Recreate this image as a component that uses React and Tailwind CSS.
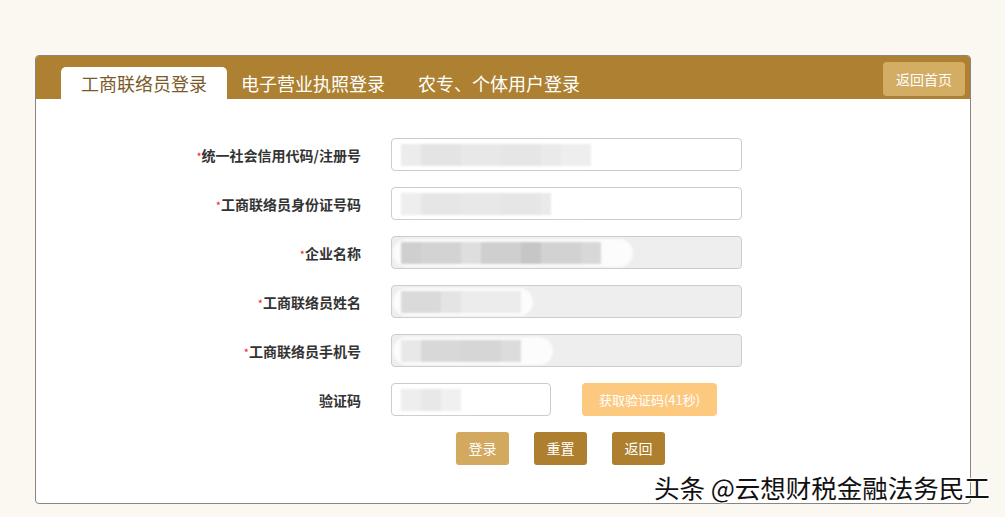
import React from 'react';

const font = { fontFamily: '"Noto Sans CJK SC", "Noto Sans", sans-serif' };

function Blur({ blocks, glow }) {
  return (
    <div className="flex h-full items-center pl-[9px]">
      <div className="relative flex h-[22px] blur-[1px]">
        {glow && <div className={`absolute -left-[8px] -top-[3px] h-[28px] rounded-full bg-white opacity-80 ${glow}`} />}
        {blocks.map((b, i) => (
          <div key={i} className={`relative h-full ${b}`} />
        ))}
      </div>
    </div>
  );
}

function Field({ label, required, disabled, blocks, glow }) {
  return (
    <div className="flex items-center">
      <div className="w-[325px] pt-[2px] text-right text-[14px] font-bold text-[#333]">
        {required && <span className="text-[11px] font-normal text-[#e23]">*</span>}
        {label}
      </div>
      <div
        className={`ml-[30px] h-[33px] w-[351px] rounded-[4px] border border-[#ccc] ${
          disabled ? 'bg-[#eeeeee]' : 'bg-white'
        }`}
      >
        <Blur blocks={blocks} glow={glow} />
      </div>
    </div>
  );
}

export default function App() {
  return (
    <div className="relative h-[517px] w-[1005px] overflow-hidden bg-[#fbf8f1] pt-[55px]" style={font}>
      <div className="ml-[35px] h-[449px] w-[936px] overflow-hidden rounded-[4px] border border-[#8a8580] bg-white">
        <div className="flex h-[43px] items-end bg-[#ad8131] pl-[25px]">
          <div className="flex h-[32px] w-[166px] items-center justify-center rounded-t-[5px] bg-white text-[18px] text-[#7b5a2a]">
            工商联络员登录
          </div>
          <div className="flex h-[32px] w-[172px] items-center justify-center text-[18px] text-white">
            电子营业执照登录
          </div>
          <div className="flex h-[32px] w-[200px] items-center justify-center text-[18px] text-white">
            农专、个体用户登录
          </div>
          <div className="flex-1" />
          <div className="mb-[2px] mr-[5px] mt-[6px] flex h-[34px] w-[82px] items-center justify-center self-start rounded-[4px] bg-[#d3ad63] text-[14px] text-white">
            返回首页
          </div>
        </div>

        <div className="flex flex-col gap-[16px] pt-[39px]">
          <Field
            label="统一社会信用代码/注册号"
            required
            glow="w-[200px]"
            blocks={['w-[20px] bg-[#ececec]', 'w-[40px] bg-[#e4e4e4]', 'w-[40px] bg-[#e8e8e8]', 'w-[40px] bg-[#e6e6e6]', 'w-[20px] bg-[#eaeaea]', 'w-[30px] bg-[#eeeeee]']}
          />
          <Field
            label="工商联络员身份证号码"
            required
            glow="w-[200px]"
            blocks={['w-[20px] bg-[#eeeeee]', 'w-[40px] bg-[#e6e6e6]', 'w-[40px] bg-[#e8e8e8]', 'w-[40px] bg-[#e6e6e6]', 'w-[10px] bg-[#eaeaea]']}
          />
          <Field
            label="企业名称"
            required
            disabled
            glow="w-[240px]"
            blocks={['w-[20px] bg-[#cfcfcf]', 'w-[40px] bg-[#d3d3d3]', 'w-[20px] bg-[#dedede]', 'w-[40px] bg-[#cfcfcf]', 'w-[20px] bg-[#c6c6c6]', 'w-[40px] bg-[#d2d2d2]', 'w-[20px] bg-[#d8d8d8]']}
          />
          <Field
            label="工商联络员姓名"
            required
            disabled
            glow="w-[140px]"
            blocks={['w-[40px] bg-[#dadada]', 'w-[20px] bg-[#e4e4e4]', 'w-[60px] bg-[#ececec]']}
          />
          <Field
            label="工商联络员手机号"
            required
            disabled
            glow="w-[160px]"
            blocks={['w-[20px] bg-[#e8e8e8]', 'w-[40px] bg-[#d8d8d8]', 'w-[40px] bg-[#d6d6d6]', 'w-[20px] bg-[#dcdcdc]']}
          />
          <div className="flex items-center">
            <div className="w-[325px] pt-[2px] text-right text-[14px] font-bold text-[#333]">验证码</div>
            <div className="ml-[30px] h-[33px] w-[160px] rounded-[4px] border border-[#ccc] bg-white">
              <Blur
                glow="w-[90px]"
                blocks={['w-[20px] bg-[#eeeeee]', 'w-[20px] bg-[#e8e8e8]', 'w-[20px] bg-[#f0f0f0]']}
              />
            </div>
            <div className="ml-[31px] flex h-[33px] w-[135px] items-center justify-center rounded-[4px] bg-[#fcc97f] text-[13px] text-white">
              获取验证码(41秒)
            </div>
          </div>
          <div className="flex pl-[420px] text-[14px] text-white">
            <div className="flex h-[33px] w-[53px] items-center justify-center rounded-[3px] bg-[#d2a95f]">登录</div>
            <div className="ml-[25px] flex h-[33px] w-[53px] items-center justify-center rounded-[3px] bg-[#ad7f2e]">重置</div>
            <div className="ml-[25px] flex h-[33px] w-[53px] items-center justify-center rounded-[3px] bg-[#ad7f2e]">返回</div>
          </div>
        </div>
      </div>

      <div
        className="absolute left-[654px] top-[470px] text-[25.5px] leading-[34px] text-[#111]"
        style={{ textShadow: '0 0 2px #fff, 1px 1px 1px #fff, -1px -1px 1px #fff' }}
      >
        头条 @云想财税金融法务民工
      </div>
    </div>
  );
}
